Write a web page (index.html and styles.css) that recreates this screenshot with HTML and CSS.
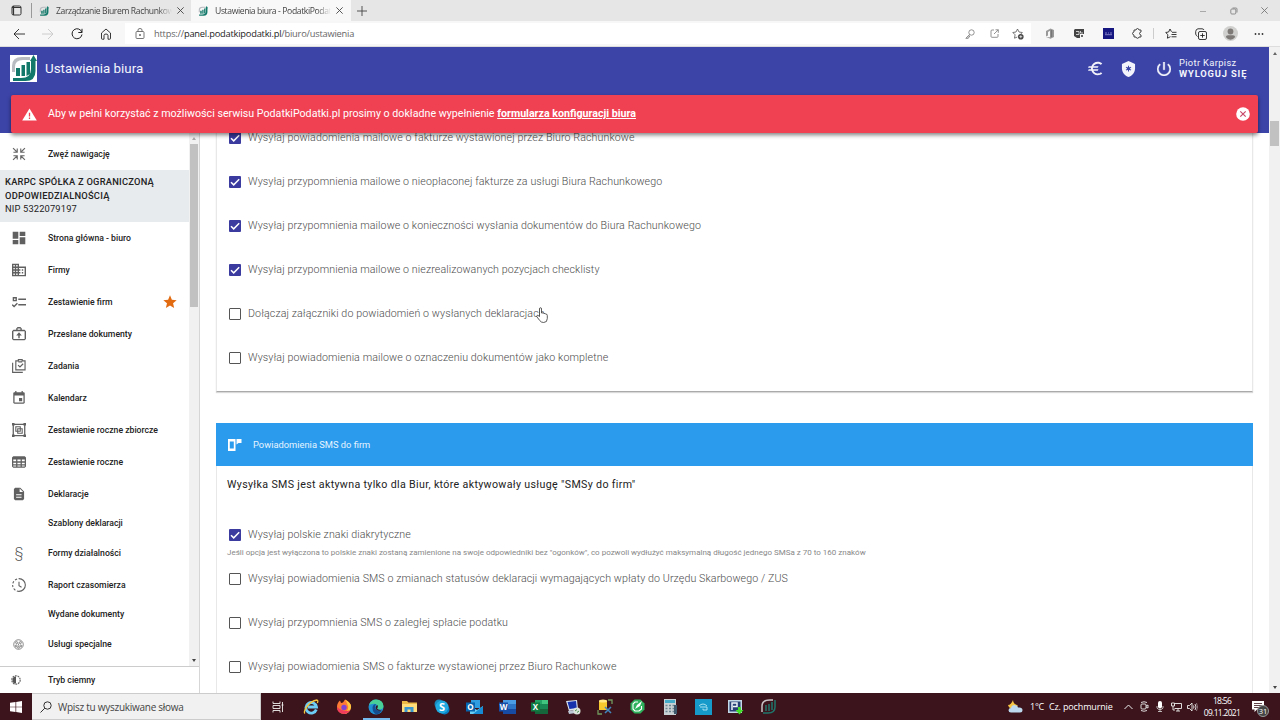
FILE: index.html
```html
<!DOCTYPE html>
<html lang="pl">
<head>
  <meta charset="UTF-8">
  <title>Ustawienia biura - PodatkiPodatki</title>
  <link rel="stylesheet" href="styles.css">
</head>
<body>

<!-- shared shapes -->
<svg class="defs" aria-hidden="true">
  <symbol id="logo" viewBox="0 0 27 27">
    <path d="M2 17V11Q2 2 12 2H20V5H13Q5 5 5 12V17Z" fill="#b9bcc0"/>
    <path d="M6 13h4v8H6zM11.500 10h3.500v11h-3.500zM16.500 7h3.500v12l-3.500 2z" fill="#12796a"/>
    <path d="M23.500 0L27 6h-1.500v10q0 10-10 10H3v-3h8q10 0 10-9V6h-1z" fill="#12796a"/>
  </symbol>
  <symbol id="close" viewBox="0 0 10 10"><path d="M1.500 1.500l7 7M8.500 1.500l-7 7" fill="none" stroke="currentColor"/></symbol>
  <symbol id="tick" viewBox="0 0 12 12"><path d="M2 6.200l2.700 2.700L10.200 3.300" fill="none" stroke="#fff" stroke-width="1.500"/></symbol>
</svg>

<div class="tabs">
  <div class="tab-menu"><svg width="11" height="11" viewBox="0 0 11 11"><rect x="1" y="1" width="9" height="9" rx="1.500" fill="none" stroke="#333"/><path d="M1 2.500h9M2.500 1v9" stroke="#333" stroke-width="1.200"/></svg></div>
  <div class="tab"><svg class="favicon"><use href="#logo"/></svg><span class="tab-title">Zarządzanie Biurem Rachunkow</span><svg class="tab-close"><use href="#close"/></svg></div>
  <div class="tab active"><svg class="favicon"><use href="#logo"/></svg><span class="tab-title">Ustawienia biura - PodatkiPodatk</span><svg class="tab-close"><use href="#close"/></svg></div>
  <div class="new-tab"><svg width="10" height="10" viewBox="0 0 10 10"><path d="M5 0v10M0 5h10" stroke="#444" stroke-width=".9"/></svg></div>
  <div class="window-buttons">
    <span><svg width="8" height="8" viewBox="0 0 8 8"><path d="M1 4.500h6" stroke="#999" stroke-width=".8"/></svg></span>
    <span><svg width="8" height="8" viewBox="0 0 8 8" fill="none" stroke="#777" stroke-width=".8"><rect x=".8" y="2" width="5" height="5" rx="1"/><path d="M2.500 1H6q1 0 1 1v3.500"/></svg></span>
    <span><svg width="9" height="9"><use href="#close"/></svg></span>
  </div>
</div>

<div class="toolbar">
  <div class="nav-buttons">
    <span><svg width="12" height="12" viewBox="0 0 12 12" fill="none" stroke="#222" stroke-width=".9"><path d="M12 6H1M6 1L1 6l5 5"/></svg></span>
    <span><svg width="12" height="12" viewBox="0 0 12 12" fill="none" stroke="#ccc"><path d="M0 6h11M6 1l5 5-5 5"/></svg></span>
    <span><svg width="12" height="12" viewBox="0 0 12 12" fill="none" stroke="#222"><path d="M10.900 4.500A5 5 0 1 0 11 6.500M11 .8v3.700H7.300"/></svg></span>
    <span><svg width="12" height="12" viewBox="0 0 12 12" fill="none" stroke="#222" stroke-width=".9"><path d="M1.500 5L6 1l4.500 4v5.500q0 .7-.7.700H8V7.500Q8 6 6 6T4 7.500v3.700H2.200q-.7 0-.7-.7z"/></svg></span>
  </div>
  <div class="address">
    <svg width="10" height="12" viewBox="0 0 10 12" fill="none" stroke="#555" stroke-width=".8"><rect x="1" y="3.500" width="8" height="7" rx="1"/><path d="M3 3.500V2q0-1.500 2-1.500T7 2v1.500"/><circle cx="5" cy="7" r=".6" fill="#555"/></svg>
    <span class="url">https://<b>panel.podatkipodatki.pl</b>/biuro/ustawienia</span>
    <div class="address-icons">
      <span><svg width="10" height="10" viewBox="0 0 10 10" fill="none" stroke="#777" stroke-width=".8"><circle cx="6.500" cy="3.500" r="2.700"/><path d="M4.500 5.500L1 9v.8h2V8h1.500V6.500"/></svg></span>
      <span><svg width="9" height="9" viewBox="0 0 9 9" fill="none" stroke="#777" stroke-width=".8"><path d="M4 1H2Q1 1 1 2v5.500Q1 8.300 2 8.300h5Q8 8.300 8 7.500V5M5.500.8H8.300v3M8.300.8L4 5"/></svg></span>
      <span><svg width="12" height="12" viewBox="0 0 12 12"><path d="M5.500 1L7 4l3.300.5-2 2M5.500 1L4 4 .8 4.500l2.300 2.300-.6 3.400L5.300 9" fill="none" stroke="#555" stroke-width=".8"/><circle cx="8.800" cy="8.700" r="2.800" fill="#444"/><path d="M7.300 8.700h3M8.800 7.200v3" stroke="#fff" stroke-width=".7"/></svg></span>
    </div>
  </div>
  <div class="extensions">
    <span><svg width="10" height="11" viewBox="0 0 10 11"><path d="M1 3l4.500-2.500L9 2v7l-3.500 1.700L1 9l4 .2V2.800L3 4v3.500L1 8.500z" fill="#999"/><path d="M6.500 2v7" stroke="#777" stroke-width="1.500"/></svg></span>
    <span><svg width="10" height="10" viewBox="0 0 10 10"><path d="M1 0h9v5H6v4H3L0 7V1z" fill="#444"/><path d="M2 2.500h3v3H2M6.500 2v2H9" fill="none" stroke="#ccc"/><rect x="7" y="6" width="2" height="2" fill="#666"/></svg></span>
    <span><svg width="11" height="11" viewBox="0 0 11 11"><rect width="11" height="11" fill="#171782"/><path d="M2 5h2M5 5h1M7 5h2M2 6.700h7" stroke="#9c9cd8" stroke-width=".8"/></svg></span>
    <span><svg width="11" height="11" viewBox="0 0 11 11"><path d="M2 2h2q.3-1.500 1.500-1.500T7 2h2v2q-1.500.2-1.500 1.500T9 7v2H7q-.2 1.300-1.500 1.300T4 9H2V7Q.5 6.800.5 5.500T2 4z" fill="none" stroke="#333" stroke-width=".9"/></svg></span>
    <i class="divider"></i>
    <span><svg width="12" height="12" viewBox="0 0 12 12" fill="none" stroke="#222" stroke-width=".9"><path d="M6.500 3.800L5 1 3.600 4 .7 4.500l2.200 2.200-.5 3.500L5.500 8.700M7 4.300h4.500M6.500 6.500h5M6.500 8.800h5"/></svg></span>
    <span><svg width="12" height="12" viewBox="0 0 12 12" fill="none" stroke="#222" stroke-width=".9"><rect x="3.500" y="3.500" width="8" height="8" rx="1.500"/><path d="M7.500 5.300v4.400M5.300 7.500h4.400M2.500 8.500Q1 7.500.7 6V3.500Q1 1 3 .8h4Q8.500.8 9 2"/></svg></span>
    <span><svg width="15" height="15" viewBox="0 0 15 15"><circle cx="7.500" cy="7.500" r="7.500" fill="#d0d0ce"/><circle cx="7.500" cy="5.500" r="2.900" fill="#7d7a78"/><path d="M2.800 11Q3 9.300 5 9.300h5q2 0 2.200 1.700-2 2.700-4.700 2.700T2.800 11z" fill="#7d7a78"/></svg></span>
    <span><svg width="10" height="4" viewBox="0 0 10 4" fill="#333"><circle cx="1.500" cy="2" r=".9"/><circle cx="5" cy="2" r=".9"/><circle cx="8.500" cy="2" r=".9"/></svg></span>
  </div>
</div>

<div class="page">
  <div class="app">
    <header class="app-header">
      <svg class="logo"><use href="#logo"/></svg>
      <h1>Ustawienia biura</h1>
      <div class="header-actions">
        <svg width="15" height="15" viewBox="2 2 20 20" fill="#f3f4fb"><path d="M15 18.500c-2.500 0-4.700-1.400-5.800-3.500H15l1-2H8.600c-.1-.6-.1-1.400 0-2H15l1-2H9.200c1.100-2.100 3.300-3.500 5.800-3.500 1.600 0 3.100.6 4.200 1.600L21 5.300C19.400 3.900 17.300 3 15 3c-3.900 0-7.200 2.500-8.500 6H3l-1 2h4.100c-.1.700-.1 1.300 0 2H3l-1 2h4.500c1.300 3.500 4.600 6 8.500 6 2.300 0 4.400-.9 6-2.300l-1.800-1.800c-1.100 1-2.600 1.600-4.200 1.600z"/></svg>
        <svg width="15" height="16" viewBox="3 1 18 22"><path d="M12 1L3 5v6c0 5.500 3.800 10.700 9 12 5.200-1.300 9-6.500 9-12V5z" fill="#f3f4fb"/><path d="M12 7.500v8M8.500 9.500l7 4M15.500 9.500l-7 4" stroke="#3c44a8" stroke-width="1.400"/><circle cx="12" cy="11.500" r="2.300" fill="#3c44a8"/></svg>
        <svg width="14" height="14" viewBox="3 3 18 18" fill="#f3f4fb"><path d="M13 3h-2v10h2V3zm4.800 2.200l-1.400 1.400A7 7 0 1 1 7.600 6.600L6.200 5.200a9 9 0 1 0 11.600 0z" stroke="#f3f4fb" stroke-width=".4"/></svg>
        <div class="user"><span>Piotr Karpisz</span><strong>WYLOGUJ SIĘ</strong></div>
      </div>
    </header>

    <div class="alert">
      <svg width="15" height="13" viewBox="0 0 15 13"><path d="M7.500.5L14.800 12.600H.2z" fill="#fff"/><path d="M7.500 4.800v3.700M7.500 9.500v1.400" stroke="#f04153" stroke-width="1.300"/></svg>
      <p>Aby w pełni korzystać z możliwości serwisu PodatkiPodatki.pl prosimy o dokładne wypełnienie <a>formularza konfiguracji biura</a></p>
      <svg class="alert-close" width="14" height="14" viewBox="0 0 14 14"><circle cx="7" cy="7" r="6.800" fill="#fff"/><path d="M4.300 4.300l5.400 5.400M9.700 4.300L4.300 9.700" stroke="#c94a6b" stroke-width="1.200"/></svg>
    </div>

    <div class="body">
      <aside class="sidebar">
        <div class="sidebar-scroll">
          <nav>
            <div class="nav-item collapse"><svg class="icon" viewBox="2 2 20 20" fill="none" stroke="#666" stroke-width="1.600"><path d="M4 9.500h5.500V4M3.500 3.500l6 6M20 9.500h-5.500V4M20.500 3.500l-6 6M4 14.500h5.500V20M3.500 20.500l6-6M20 14.500h-5.500V20M20.500 20.500l-6-6"/></svg><span>Zwęź nawigację</span></div>
            <div class="company"><strong>KARPC SPÓŁKA Z OGRANICZONĄ ODPOWIEDZIALNOŚCIĄ</strong><span>NIP 5322079197</span></div>
            <div class="nav-item"><svg class="icon" viewBox="2 2 20 20"><path d="M3 13h8V3H3zm0 8h8v-6H3zm10 0h8V11h-8zm0-18v6h8V3z"/></svg><span>Strona główna - biuro</span></div>
            <div class="nav-item"><svg class="icon" viewBox="2 2 20 20"><path d="M12 7V3H2v18h20V7H12zM6 19H4v-2h2zm0-4H4v-2h2zm0-4H4V9h2zm0-4H4V5h2zm4 12H8v-2h2zm0-4H8v-2h2zm0-4H8V9h2zm0-4H8V5h2zm10 12h-8v-2h2v-2h-2v-2h2v-2h-2V9h8zm-2-8h-2v2h2zm0 4h-2v2h2z"/></svg><span>Firmy</span></div>
            <div class="nav-item"><svg class="icon" viewBox="2 2 20 20"><path d="M3 5h6v6H3zm2 2v2h2V7zm6 0h11v2H11zm0 8h11v2H11zm-6 5l-3.500-3.500L3 15.100l2 2 4-4 1.400 1.400z"/></svg><span>Zestawienie firm</span><svg class="star" viewBox="0 0 24 24"><path d="M12 17.300l6.200 3.700-1.600-7L22 9.200l-7.200-.6L12 2 9.200 8.600 2 9.200 7.500 14l-1.700 7z"/></svg></div>
            <div class="nav-item"><svg class="icon" viewBox="2 2 20 20"><path d="M20 6h-4V4l-2-2h-4L8 4v2H4L2 8v11l2 2h16l2-2V8zM10 4h4v2h-4zm10 15H4V8h16zM8 14h3v4h2v-4h3l-4-4.500z"/></svg><span>Przesłane dokumenty</span></div>
            <div class="nav-item"><svg class="icon" viewBox="1 1 22 22" fill="none" stroke="#606060" stroke-width="1.800"><path d="M7 4h4V2h6v2h4.500v14H7zM2 7v15h16M10.500 10.500l3 3 5-5M11 5.500h6"/></svg><span>Zadania</span></div>
            <div class="nav-item"><svg class="icon" viewBox="2 1 20 22"><path d="M18 3V1h-2v2H8V1H6v2H4L3 4v16l2 1h14l2-1V4l-1-1zm1 16H5V8h14zm-7-7h5v5h-5z"/></svg><span>Kalendarz</span></div>
            <div class="nav-item"><svg class="icon" viewBox="1 1 22 22"><path d="M1 1h4v1h14V1h4v4h-1v14h1v4h-4v-1H5v1H1v-4h1V5H1zm4 3v1H4v14h1v1h14v-1h1V5h-1V4z" fill-rule="evenodd"/><path d="M7 7h7v7H7zM10 10h7v7h-7z" fill="none" stroke="#606060" stroke-width="1.700"/></svg><span>Zestawienie roczne zbiorcze</span></div>
            <div class="nav-item"><svg class="icon" viewBox="1 2 22 20"><path d="M3 3h18l2 2v14l-2 2H3l-2-2V5zm0 5v3h4.500V8zm6.500 0v3h5V8zm7 0v3H21V8zM3 13v2.500h4.500V13zm6.500 0v2.500h5V13zm7 0v2.500H21V13zM3 17.500V19h4.500v-1.500zm6.500 0V19h5v-1.500zm7 0V19H21v-1.500z" fill-rule="evenodd"/></svg><span>Zestawienie roczne</span></div>
            <div class="nav-item"><svg class="icon" viewBox="2 1 20 22"><path d="M14 2H6L4 4v16l2 2h12l2-2V8zm2 16H7.500v-1.700H16zm0-4H7.500v-1.700H16zm-3-5V3.500L18.500 9z" fill-rule="evenodd"/></svg><span>Deklaracje</span></div>
            <div class="nav-item no-icon"><span>Szablony deklaracji</span></div>
            <div class="nav-item"><i class="icon paragraph">§</i><span>Formy działalności</span></div>
            <div class="nav-item"><svg class="icon" viewBox="1 1 22 22" fill="none" stroke="#606060" stroke-width="1.700"><path d="M12 2a10 10 0 0 1 0 20"/><path d="M12 22a10 10 0 0 1 0-20" stroke-dasharray="3.500 2.500"/><path d="M12 7v6l4 2.500"/></svg><span>Raport czasomierza</span></div>
            <div class="nav-item no-icon"><span>Wydane dokumenty</span></div>
            <div class="nav-item"><svg class="icon small" viewBox="0 0 12 12" fill="none" stroke="#606060"><circle cx="6" cy="6" r="5.200"/><circle cx="4" cy="4" r="1.100"/><circle cx="8" cy="4" r="1.100"/><circle cx="3.500" cy="7.500" r="1"/><circle cx="8.500" cy="7.500" r="1"/><circle cx="6" cy="9" r="1"/><path d="M6 5v2"/></svg><span>Usługi specjalne</span></div>
          </nav>
          <div class="scrollbar side"><i class="arrow up"></i><i class="thumb"></i><i class="arrow down"></i></div>
        </div>
        <div class="theme-switch"><svg width="10" height="10" viewBox="0 0 10 10"><circle cx="5" cy="5" r="4.200" fill="none" stroke="#666" stroke-width="1.200" stroke-dasharray="1.800 .8"/><path d="M5 1.500a3.500 3.500 0 0 0 0 7z" fill="#555"/></svg><span>Tryb ciemny</span></div>
      </aside>

      <main>
        <section class="card mail">
          <label class="option"><i class="box checked"><svg><use href="#tick"/></svg></i><span>Wysyłaj powiadomienia mailowe o fakturze wystawionej przez Biuro Rachunkowe</span></label>
          <label class="option"><i class="box checked"><svg><use href="#tick"/></svg></i><span>Wysyłaj przypomnienia mailowe o nieopłaconej fakturze za usługi Biura Rachunkowego</span></label>
          <label class="option"><i class="box checked"><svg><use href="#tick"/></svg></i><span>Wysyłaj przypomnienia mailowe o konieczności wysłania dokumentów do Biura Rachunkowego</span></label>
          <label class="option"><i class="box checked"><svg><use href="#tick"/></svg></i><span>Wysyłaj przypomnienia mailowe o niezrealizowanych pozycjach checklisty</span></label>
          <label class="option"><i class="box"></i><span>Dołączaj załączniki do powiadomień o wysłanych deklaracjach</span>
            <svg class="cursor" viewBox="0 0 12 16"><path d="M3.500 9.500V2q0-1.300 1-1.300t1 1.300v4q2-.5 2.500.5 1.500-.3 1.800.6 1.500-.2 1.500 1.400v3q0 4-3.600 4-2.700 0-4-2L.8 9.700q-.4-1 .4-1.300.8-.2 1.500.5z" fill="#fff" stroke="#333" stroke-width=".8"/></svg></label>
          <label class="option"><i class="box"></i><span>Wysyłaj powiadomienia mailowe o oznaczeniu dokumentów jako kompletne</span></label>
        </section>

        <section class="card sms">
          <h2><svg width="15" height="14" viewBox="0 0 15 14"><path d="M1 1h7.500v12H1zM2.800 3.500v7h4v-7z" fill="#fff" fill-rule="evenodd"/><path d="M9.500 1h5v4h-3L9.500 6.500z" fill="#fff"/></svg><span>Powiadomienia SMS do firm</span></h2>
          <p class="intro">Wysyłka SMS jest aktywna tylko dla Biur, które aktywowały usługę "SMSy do firm"</p>
          <div class="with-hint">
            <label class="option"><i class="box checked"><svg><use href="#tick"/></svg></i><span>Wysyłaj polskie znaki diakrytyczne</span></label>
            <p class="hint">Jeśli opcja jest wyłączona to polskie znaki zostaną zamienione na swoje odpowiedniki bez "ogonków", co pozwoli wydłużyć maksymalną długość jednego SMSa z 70 to 160 znaków</p>
          </div>
          <label class="option"><i class="box"></i><span>Wysyłaj powiadomienia SMS o zmianach statusów deklaracji wymagających wpłaty do Urzędu Skarbowego / ZUS</span></label>
          <label class="option"><i class="box"></i><span>Wysyłaj przypomnienia SMS o zaległej spłacie podatku</span></label>
          <label class="option"><i class="box"></i><span>Wysyłaj powiadomienia SMS o fakturze wystawionej przez Biuro Rachunkowe</span></label>
        </section>
      </main>
    </div>
  </div>
  <div class="scrollbar window"><i class="arrow up"></i><i class="thumb"></i><i class="arrow down"></i></div>
</div>

<div class="taskbar">
  <div class="start"><svg width="12" height="12" viewBox="0 0 12 12" fill="#fff"><path d="M0 1.800L5.500 1v4.700H0zM6.200.9L12 0v5.700H6.200zM0 6.300h5.500V11L0 10.200zM6.200 6.300H12V12l-5.800-.9z"/></svg></div>
  <div class="search"><svg width="12" height="12" viewBox="0 0 12 12" fill="none" stroke="#333"><circle cx="7.500" cy="4.500" r="3.700"/><path d="M4.800 7.200L.5 11.500"/></svg><span>Wpisz tu wyszukiwane słowa</span></div>
  <div class="apps">
    <span><svg width="12" height="12" viewBox="0 0 12 12" fill="none" stroke="#eee" stroke-width=".9"><path d="M1 .5v2h7v-2M1 11.500v-2h7v2M1 4.500h7v3H1zM10.500 1v10M9.500 4h2"/></svg></span>
    <span><svg width="16" height="16" viewBox="0 0 16 16" fill="none"><path d="M13.300 10.500A5.300 5.300 0 1 1 13.500 8H5" stroke="#6dcdf5" stroke-width="2.800"/><path d="M2 14.500Q0 13 4 7.500T14 1q1.500.5.300 3" stroke="#f5c63c" stroke-width="1.300"/></svg></span>
    <span><svg width="16" height="16" viewBox="0 0 16 16"><path d="M8 15A7 7 0 0 1 1 8Q1 4 4 1.500L5 4l2-.5L9 .5Q15 3 15 8a7 7 0 0 1-7 7z" fill="#ff7a35"/><path d="M9 .5Q17 5 14.500 10 12 15 8 15 13 11 12 7T9 .5z" fill="#ffc83f"/><path d="M1 8q0 6 7 7 4 0 6-4-4 2-8 0Q3 10 1 8z" fill="#f13c5d"/><circle cx="8" cy="8.500" r="2.700" fill="#8145d5"/></svg></span>
    <span class="current"><svg width="16" height="16" viewBox="0 0 16 16"><circle cx="8" cy="8" r="7.500" fill="#2090d2"/><path d="M1 6Q3 .5 8 .5q7 0 7.500 6.500 0 3-3.500 3.500-3 0-3-1.500 1-1 .5-2.500Q8 3.500 1 6z" fill="#48cf98"/><path d="M4.500 8.500Q5 5 8 5q-2 3 0 5.500 2 2 6 1Q11 16 7.500 15 4.500 13 4.500 8.500z" fill="#164f91"/><path d="M9.500 6q1 2-.5 3.500 1 2 5 1.300Q11 13 8.300 10.500 6.500 7.500 9.500 6z" fill="#3b141c"/></svg></span>
    <span><svg width="15" height="13" viewBox="0 0 15 13"><path d="M0 1h5l1.500 1.500H15V12H0z" fill="#ecb947"/><path d="M0 4h15v8H0z" fill="#ffdc7c"/><path d="M2.500 12V7h9v5h-3V9.500h-3V12z" fill="#3a97cf"/></svg></span>
    <span><svg width="16" height="16" viewBox="0 0 16 16"><circle cx="5" cy="5" r="4.500" fill="#1689bd"/><circle cx="10.500" cy="10.500" r="5" fill="#087ec3"/><circle cx="8" cy="8" r="6.500" fill="#20aae0"/><text x="8" y="12" class="glyph">S</text></svg></span>
    <span><svg width="17" height="16" viewBox="0 0 17 16"><path d="M5 1h9v8H5z" fill="#2f9ddf"/><path d="M4 7l7 4 6-4v8H4z" fill="#69cdf3"/><path d="M17 7v8H7z" fill="#168bd4"/><rect y="3.500" width="9" height="9" fill="#0764ae"/><text x="4.500" y="11" class="glyph small">O</text></svg></span>
    <span><svg width="17" height="16" viewBox="0 0 17 16"><path d="M4 1h13v5H4z" fill="#4a9be4"/><path d="M4 5h13v5H4z" fill="#2d73c6"/><path d="M4 10h13v5H4z" fill="#174ba3"/><rect y="3.500" width="9" height="9" fill="#164ca5"/><text x="4.500" y="11" class="glyph small">W</text></svg></span>
    <span><svg width="17" height="16" viewBox="0 0 17 16"><path d="M4 1h13v5H4z" fill="#23a366"/><path d="M11 1h6v5h-6z" fill="#42c481"/><path d="M4 5h13v5H4z" fill="#198754"/><path d="M4 10h13v5H4z" fill="#16663c"/><rect y="3.500" width="9" height="9" fill="#107c41"/><text x="4.500" y="11" class="glyph small">X</text></svg></span>
    <span><svg width="16" height="16" viewBox="0 0 16 16"><path d="M1 2l11-1 1 9-9 2z" fill="#dce5ef"/><path d="M2.500 3l8.500-1 .8 7-7.300 1z" fill="#1632ad"/><path d="M3 12l6-1 2 3-7 1z" fill="#bdc8d5"/><circle cx="12" cy="12" r="3.500" fill="#dce3dc"/><path d="M10 12l2-1.500M12 13.500l2-1.500" stroke="#4b9551"/></svg></span>
    <span><svg width="16" height="16" viewBox="0 0 16 16"><path d="M2 2h8v9H2z" fill="#f6c82d"/><ellipse cx="6" cy="2" rx="4" ry="1.500" fill="#ffe883"/><path d="M11 1h4v4M1 11v4h4" stroke="#71995d" fill="none" stroke-width="1.300"/><path d="M8 8l6 6M14 8l-6 6" stroke="#4386bd" stroke-width="1.600"/></svg></span>
    <span><svg width="15" height="15" viewBox="0 0 15 15"><path d="M4.500.5h6l4 4v6l-4 4h-6l-4-4v-6z" fill="#2eb35c"/><path d="M8 3H5L3 5v5l2 2h4l2.500-2V7" fill="none" stroke="#fff" stroke-width="1.100"/><path d="M5 10l2-4 5-4-2 5z" fill="#fff"/></svg></span>
    <span><svg width="14" height="16" viewBox="0 0 14 16"><rect width="12" height="16" fill="#cad1d4"/><rect x="1" y="1" width="10" height="3" fill="#45aac8"/><path d="M1.500 6.500h9M1.500 9.500h9M1.500 12.500h9" stroke="#6c8592" stroke-width="1.600" stroke-dasharray="2 1.500"/><path d="M10 6h3v9h-3z" fill="#3f586b"/></svg></span>
    <span><svg width="17" height="16" viewBox="0 0 17 16"><rect width="17" height="16" fill="#159ac9"/><path d="M4 7q4-4 8 0M5 8h7v3H8V9.500" stroke="#b8e8f4" stroke-width=".9" fill="none"/></svg></span>
    <span><svg width="16" height="16" viewBox="0 0 16 16"><path d="M0 1h14v13H0z" fill="#c4d9e8"/><path d="M1.500 2.500h11v10h-11z" fill="#263f74"/><path d="M4 11V4h5v3.500H5" fill="none" stroke="#f0f5fb" stroke-width="1.500"/><path d="M10 8h3v3h2.500l-4 4.500-4-4.500H10z" fill="#42e02a"/></svg></span>
    <span><svg width="15" height="15" viewBox="0 0 15 15" fill="none"><path d="M1 13V7q0-6 8-6h3" stroke="#c6c1c3" stroke-width="1.500"/><path d="M14 1v7q0 6-7 6H2M5 6v6M8 5v7M11 3v8" stroke="#20756b" stroke-width="1.500"/></svg></span>
  </div>
  <div class="tray">
    <svg class="weather" width="15" height="13" viewBox="0 0 15 13"><path d="M5 0q0 4 5 5.500Q7 10 2 8 .5 7 0 5q3 0 5-5z" fill="#f7c544"/><path d="M3 12.500q-2.500 0-2.500-2.200T3 8q.5-3 3.500-3 2.800 0 3.500 2.500 4.500-.5 4.500 2.500 0 2.500-2.500 2.500z" fill="#bcd9ed"/></svg>
    <span class="temperature">1°C</span><span class="forecast">Cz. pochmurnie</span>
    <div class="tray-icons">
      <span><svg width="9" height="6" viewBox="0 0 9 6"><path d="M.5 5l4-4 4 4" fill="none" stroke="#eee"/></svg></span>
      <span><svg width="9" height="11" viewBox="0 0 9 11" fill="none" stroke="#eee" stroke-width=".9"><rect x="1" y="3" width="5" height="5" rx="1"/><path d="M6 5l2-1v3L6 6M1 1.500Q4 0 7 1.500M1 9.500Q4 11 7 9.500"/></svg></span>
      <span><svg width="8" height="11" viewBox="0 0 8 11"><rect x="2" y="0" width="4" height="7.500" rx="2" fill="#fff"/><path d="M1 5v2q.5 1.500 3 1.500T7 7V5M4 8v2.500M2 10.500h4" fill="none" stroke="#ddd" stroke-width=".8"/></svg></span>
      <span><svg width="11" height="10" viewBox="0 0 11 10" fill="none" stroke="#eee" stroke-width=".9"><path d="M4 1.500h6.500v5H3.500M5 9h4M7 6.500V9M.5 1h3v3h-3zM2 4v4h2"/></svg></span>
      <span><svg width="11" height="10" viewBox="0 0 11 10" fill="none" stroke="#eee" stroke-width=".9"><path d="M.5 3.500h2L5 1v8L2.500 6.500h-2zM6.500 3.500q1 1.500 0 3M8 2q2 3 0 6"/><path d="M9.500 1q2 4 0 8" stroke="#9a858a"/></svg></span>
    </div>
    <div class="clock"><span>18:56</span><span>09.11.2021</span></div>
    <div class="notifications"><svg width="12" height="11" viewBox="0 0 12 11"><path d="M0 0h12v8.500H5L2.500 11V8.500H0z" fill="#fff"/><path d="M2 2.500h8M2 4.500h8M2 6.500h5" stroke="#3b141c" stroke-width=".8"/></svg><b>31</b></div>
  </div>
</div>

</body>
</html>
```

FILE: styles.css
```css
* {
  box-sizing: border-box;
}

body {
  margin: 0;
  width: 1280px;
  height: 720px;
  overflow: hidden;
  display: flex;
  flex-direction: column;
  font-family: Roboto, sans-serif;
  background: #fff;
  color: #222;
}

h1, h2, p {
  margin: 0;
  font-weight: 400;
}

svg {
  display: block;
  flex: none;
}

.defs {
  position: absolute;
  width: 0;
  height: 0;
}

/* Browser */
.tabs {
  height: 21px;
  flex: none;
  display: flex;
  align-items: stretch;
  background: #e6e6e6;
  color: #444;
  font: 8.6px "Open Sans", sans-serif;
}

.tab-menu {
  width: 32px;
  display: flex;
  align-items: center;
  justify-content: center;
  background: linear-gradient(#999, #999) right center / 1px 15px no-repeat;
}

.tab {
  width: 159px;
  display: flex;
  align-items: center;
  padding: 0 6px 0 7px;
}

.tab.active {
  width: 160px;
  background: #f8f8f8;
}

.favicon {
  width: 10px;
  height: 10px;
}

.tab-title {
  width: 116px;
  margin: 0 4px 0 7px;
  letter-spacing: -.38px;
  white-space: nowrap;
  mask-image: linear-gradient(to right, #000 88%, transparent);
}

.tab-close {
  width: 9px;
  height: 9px;
}

.new-tab {
  display: flex;
  align-items: center;
  margin-left: 6px;
}

.window-buttons {
  display: flex;
  margin-left: auto;
  color: #777;
}

.window-buttons span {
  width: 31px;
  display: flex;
  align-items: center;
  justify-content: center;
}

.toolbar {
  height: 26px;
  flex: none;
  display: flex;
  align-items: center;
  background: #f7f7f7;
  border-bottom: 1px solid #ddd;
}

.nav-buttons {
  display: flex;
  width: 125px;
  padding-left: 4px;
}

.nav-buttons span {
  width: 29px;
  display: flex;
  justify-content: center;
}

.address {
  width: 906px;
  height: 21px;
  display: flex;
  align-items: center;
  padding-left: 10px;
  background: #fff;
}

.url {
  margin-left: 9px;
  font: 9.3px "Open Sans", sans-serif;
  letter-spacing: -.22px;
  color: #666;
}

.url b {
  font-weight: 400;
  color: #222;
}

.address-icons {
  display: flex;
  margin-left: auto;
  padding-right: 1px;
}

.address-icons span {
  width: 24px;
  display: flex;
  align-items: center;
  justify-content: center;
}

.extensions {
  display: flex;
  align-items: center;
  padding-left: 4px;
}

.extensions span {
  width: 29.4px;
  display: flex;
  justify-content: center;
}

.divider {
  width: 4px;
  height: 11px;
  border-left: 1px solid #ccc;
}

/* Application */
.page {
  height: 646px;
  flex: none;
  display: flex;
}

.app {
  position: relative;
  width: 1269px;
  height: 646px;
  overflow: hidden;
}

.app-header {
  height: 86px;
  display: flex;
  align-items: flex-start;
  padding: 8px 22px 0 10px;
  background: #3c44a8;
  color: #f3f4fb;
}

.logo {
  width: 27px;
  height: 27px;
  background: #fff;
}

.app-header h1 {
  margin-left: 8px;
  font-size: 13.33px;
  line-height: 27px;
}

.header-actions {
  display: flex;
  align-items: center;
  height: 27px;
  margin-left: auto;
}

.header-actions svg:nth-child(2) {
  margin-left: 18px;
}

.header-actions svg:nth-child(3) {
  margin-left: 21px;
}

.user {
  width: 68px;
  margin-left: 8px;
  padding-bottom: 2px;
  font-size: 9.33px;
  line-height: 11px;
  letter-spacing: .35px;
  white-space: nowrap;
}

.user span, .user strong {
  display: block;
}

.user strong {
  font-weight: 700;
  letter-spacing: .85px;
}

.alert {
  position: absolute;
  z-index: 2;
  top: 48px;
  left: 11px;
  width: 1247px;
  height: 38px;
  display: flex;
  align-items: center;
  padding: 0 8px 0 11px;
  border-radius: 2px;
  background: #f04153;
  color: #fff;
  box-shadow: 0 2px 4px rgba(0, 0, 0, .5);
}

.alert p {
  margin-left: 11px;
  padding-bottom: 1px;
  font-size: 10.67px;
  white-space: nowrap;
}

.alert a {
  font-weight: 700;
  text-decoration: underline;
}

.alert-close {
  margin-left: auto;
}

.body {
  height: 560px;
  display: flex;
}

.sidebar {
  width: 200px;
  flex: none;
  display: flex;
  flex-direction: column;
  border-right: 1px solid #d6d6d6;
  font-size: 8.67px;
  font-weight: 500;
}

.sidebar-scroll {
  height: 533px;
  display: flex;
}

nav {
  width: 189px;
}

.nav-item {
  height: 32px;
  display: flex;
  align-items: center;
  padding: 0 12px;
}

.nav-item.collapse {
  height: 37px;
  padding-top: 5px;
}

.nav-item.no-icon {
  height: 27px;
  padding-left: 48px;
}

.nav-item span {
  flex: 1;
  padding-bottom: 1px;
  white-space: nowrap;
}

.icon {
  width: 14px;
  height: 14px;
  margin-right: 22px;
  fill: #606060;
}

.icon[fill="none"] {
  fill: none;
}

.icon.small {
  width: 11px;
  height: 11px;
  margin: 0 24px 0 1px;
  stroke-width: .8;
}

.icon.paragraph {
  color: #555;
  font: 300 14px/14px Roboto, sans-serif;
  text-align: center;
}

.star {
  width: 16px;
  height: 16px;
  margin-right: -1px;
  fill: #e26a10;
}

.company {
  height: 52px;
  padding: 5px 5px 0;
  background: #e8ebee;
  font-size: 9.33px;
  line-height: 13.7px;
}

.company strong {
  display: block;
  font-weight: 500;
  letter-spacing: .24px;
}

.company span {
  font-weight: 400;
  letter-spacing: .15px;
}

.theme-switch {
  height: 27px;
  display: flex;
  align-items: center;
  padding-left: 11px;
  border-top: 1px solid #ccc;
}

.theme-switch span {
  margin-left: 27px;
  padding-bottom: 1px;
}

main {
  flex: 1;
  overflow: hidden;
  padding: 0 16px;
}

.card {
  border: 1px solid #e8e8e8;
  border-top: 0;
}

.mail {
  height: 276px;
  margin-top: -17px;
  border-bottom-color: #aaa;
  box-shadow: 0 1px 1px rgba(0, 0, 0, .15);
}

.sms {
  height: 400px;
  margin-top: 31px;
}

.option {
  position: relative;
  height: 44px;
  display: flex;
  align-items: center;
  padding-left: 12px;
  color: #4c4c4c;
  font-size: 10.67px;
  font-weight: 300;
  letter-spacing: .1px;
  white-space: nowrap;
}

.option span {
  padding-bottom: 1px;
}

.box {
  width: 12px;
  height: 12px;
  margin-right: 7px;
  border: 1px solid #555;
  border-radius: 1px;
}

.box.checked {
  border: 0;
  background: #3a3a9f;
}

.box svg {
  width: 12px;
  height: 12px;
}

.cursor {
  position: absolute;
  top: 15px;
  left: 319px;
  width: 12px;
  height: 16px;
}

.sms h2 {
  height: 43px;
  display: flex;
  align-items: center;
  margin: 0 -1px;
  padding-left: 11px;
  background: #2b9bed;
  color: #e6f4ff;
  font-size: 9.33px;
}

.sms h2 span {
  margin-left: 11px;
}

.intro {
  height: 47px;
  padding: 12px 0 0 10px;
  font-size: 10.67px;
  line-height: 14px;
  letter-spacing: .33px;
}

.with-hint {
  height: 44px;
  padding-top: 14px;
}

.with-hint .option {
  height: 16px;
}

.hint {
  margin-top: 4px;
  padding-left: 10px;
  color: #888;
  font-size: 8px;
  line-height: 12px;
}

/* Scrollbars */
.scrollbar {
  display: flex;
  flex-direction: column;
  align-items: center;
  background: #f1f1f1;
}

.scrollbar.side {
  width: 10px;
}

.scrollbar.window {
  width: 11px;
}

.thumb {
  width: 8px;
  background: #c1c1c1;
}

.side .thumb {
  height: 163px;
  margin-top: 4px;
}

.window .thumb {
  width: 9px;
  height: 25px;
  margin-top: 66px;
}

.arrow {
  width: 0;
  height: 0;
  border: 2.5px solid transparent;
}

.arrow.up {
  margin-top: 2px;
  border-top: 0;
  border-bottom: 3px solid #666;
}

.side .arrow.up {
  margin-top: 4px;
  border-bottom-color: #aaa;
}

.window .arrow.up {
  margin-top: 5px;
}

.arrow.down {
  margin-top: auto;
  margin-bottom: 4px;
  border-bottom: 0;
  border-top: 3px solid #444;
}

/* Taskbar */
.taskbar {
  height: 27px;
  flex: none;
  display: flex;
  background: #3b141c;
  color: #fff;
  font-family: "Open Sans", sans-serif;
}

.start {
  width: 32px;
  display: flex;
  align-items: center;
  justify-content: center;
}

.search {
  width: 229px;
  display: flex;
  align-items: center;
  padding-left: 8px;
  border: 1px solid #ccc;
  border-left: 0;
  background: #f1f1f1;
  color: #444;
  font-size: 10px;
  letter-spacing: -.27px;
}

.search span {
  margin-left: 6px;
}

.apps {
  display: flex;
  margin-left: 1px;
}

.apps span {
  width: 32.7px;
  display: flex;
  align-items: center;
  justify-content: center;
}

.apps .current {
  background: linear-gradient(#76b9ed, #76b9ed) center bottom / 27px 2px no-repeat;
}

.glyph {
  fill: #fff;
  font: 700 11px "Open Sans", sans-serif;
  text-anchor: middle;
}

.glyph.small {
  font-size: 8px;
}

.tray {
  display: flex;
  align-items: center;
  margin-left: auto;
  width: 272px;
  font-size: 9px;
  white-space: nowrap;
}

.temperature {
  width: 14px;
  margin-left: 7px;
  letter-spacing: -.2px;
}

.forecast {
  width: 64px;
  margin-left: 5px;
  letter-spacing: -.15px;
}

.tray-icons {
  display: flex;
  margin-left: 8px;
}

.tray-icons span {
  width: 15.8px;
  display: flex;
  align-items: center;
  justify-content: center;
}

.clock {
  width: 44px;
  font-size: 8.5px;
  line-height: 12px;
  letter-spacing: -.7px;
  text-align: center;
}

.clock span {
  display: block;
}

.notifications {
  position: relative;
  margin-left: 8px;
}

.notifications b {
  position: absolute;
  top: 4px;
  left: 5px;
  width: 12px;
  height: 12px;
  border: 1px solid #999;
  border-radius: 50%;
  background: #444;
  font-size: 7.5px;
  font-weight: 400;
  line-height: 10px;
  text-align: center;
}
```
